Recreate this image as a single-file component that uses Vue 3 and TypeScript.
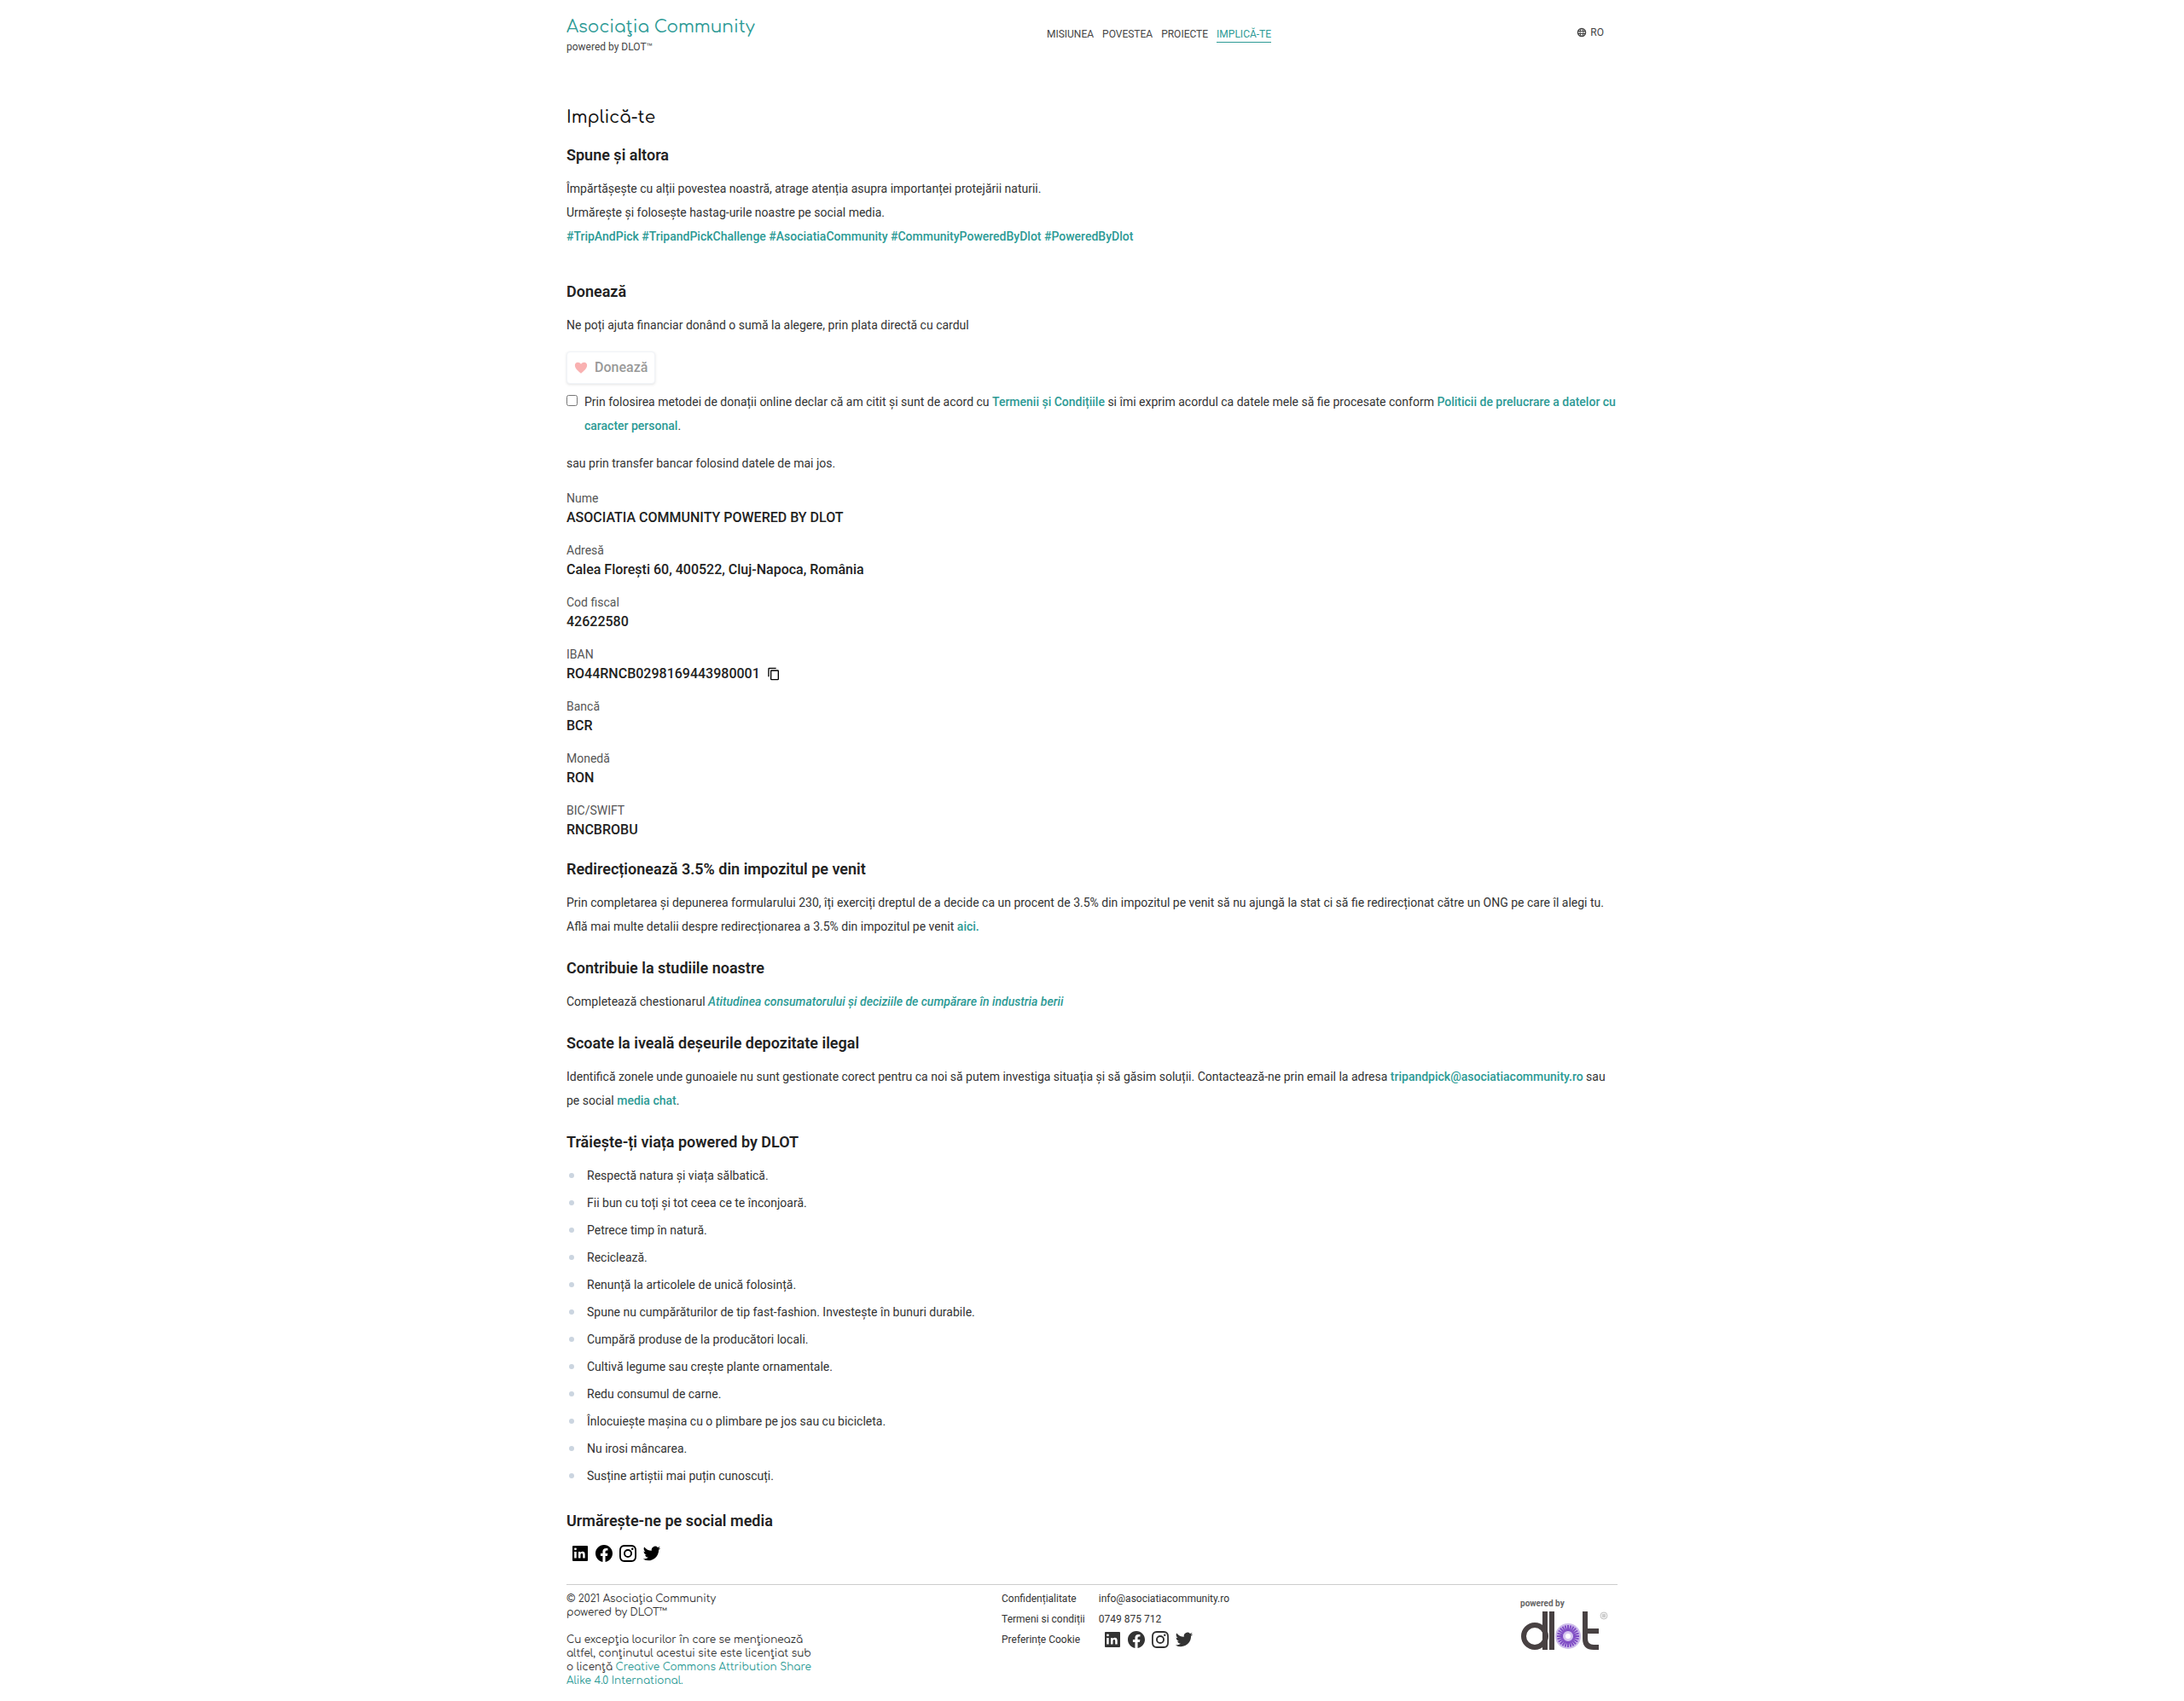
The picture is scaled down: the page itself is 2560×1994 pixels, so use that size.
<script setup lang="ts">
import { ref } from 'vue'

interface NavItem {
  label: string
  active?: boolean
}

interface BankField {
  label: string
  value: string
  copy?: boolean
}

interface SocialIcon {
  name: string
  path: string
}

const accepted = ref(false)

const nav: NavItem[] = [
  { label: 'Misiunea' },
  { label: 'Povestea' },
  { label: 'Proiecte' },
  { label: 'Implică-te', active: true },
]

const hashtags = [
  '#TripAndPick',
  '#TripandPickChallenge',
  '#AsociatiaCommunity',
  '#CommunityPoweredByDlot',
  '#PoweredByDlot',
]

const bank: BankField[] = [
  { label: 'Nume', value: 'ASOCIATIA COMMUNITY POWERED BY DLOT' },
  { label: 'Adresă', value: 'Calea Florești 60, 400522, Cluj-Napoca, România' },
  { label: 'Cod fiscal', value: '42622580' },
  { label: 'IBAN', value: 'RO44RNCB0298169443980001', copy: true },
  { label: 'Bancă', value: 'BCR' },
  { label: 'Monedă', value: 'RON' },
  { label: 'BIC/SWIFT', value: 'RNCBROBU' },
]

const habits = [
  'Respectă natura și viața sălbatică.',
  'Fii bun cu toți și tot ceea ce te înconjoară.',
  'Petrece timp în natură.',
  'Reciclează.',
  'Renunță la articolele de unică folosință.',
  'Spune nu cumpărăturilor de tip fast-fashion. Investește în bunuri durabile.',
  'Cumpără produse de la producători locali.',
  'Cultivă legume sau crește plante ornamentale.',
  'Redu consumul de carne.',
  'Înlocuiește mașina cu o plimbare pe jos sau cu bicicleta.',
  'Nu irosi mâncarea.',
  'Susține artiștii mai puțin cunoscuți.',
]

const legal = ['Confidențialitate', 'Termeni si condiții', 'Preferințe Cookie']

const socials: SocialIcon[] = [
  {
    name: 'LinkedIn',
    path: 'M4 3h16a1 1 0 0 1 1 1v16a1 1 0 0 1-1 1H4a1 1 0 0 1-1-1V4a1 1 0 0 1 1-1zm8.5 8.2V10H10v7.500h2.500v-4c0-1 .6-1.600 1.400-1.600s1.300.6 1.300 1.600v4h2.500v-4.300c0-2.300-1.200-3.400-2.800-3.400-1.200 0-1.900.6-2.400 1.400zM6.500 8.300a1.400 1.400 0 1 0 0-2.900 1.400 1.400 0 0 0 0 2.900zm1.200 9.200V10H5.200v7.500h2.500z',
  },
  {
    name: 'Facebook',
    path: 'M12 2C6.477 2 2 6.477 2 12c0 4.991 3.657 9.128 8.438 9.879V14.890h-2.540V12h2.540V9.797c0-2.506 1.492-3.890 3.777-3.890 1.094 0 2.238.195 2.238.195v2.460h-1.260c-1.243 0-1.630.771-1.630 1.562V12h2.773l-.443 2.890h-2.330v6.989C18.343 21.129 22 16.990 22 12c0-5.523-4.477-10-10-10z',
  },
  {
    name: 'Instagram',
    path: 'M12 2c2.717 0 3.056.010 4.122.060 1.065.050 1.790.217 2.428.465.660.254 1.216.598 1.772 1.153a4.908 4.908 0 0 1 1.153 1.772c.247.637.415 1.363.465 2.428.047 1.066.060 1.405.060 4.122s-.010 3.056-.060 4.122c-.050 1.065-.218 1.790-.465 2.428a4.883 4.883 0 0 1-1.153 1.772 4.915 4.915 0 0 1-1.772 1.153c-.637.247-1.363.415-2.428.465-1.066.047-1.405.060-4.122.060s-3.056-.010-4.122-.060c-1.065-.050-1.790-.218-2.428-.465a4.890 4.890 0 0 1-1.772-1.153 4.904 4.904 0 0 1-1.153-1.772c-.248-.637-.415-1.363-.465-2.428C2.013 15.056 2 14.717 2 12s.010-3.056.060-4.122c.050-1.066.217-1.790.465-2.428a4.880 4.880 0 0 1 1.153-1.772A4.897 4.897 0 0 1 5.450 2.525c.638-.248 1.362-.415 2.428-.465C8.944 2.013 9.283 2 12 2zm0 1.900c-2.650 0-2.960.010-4.010.060-.980.040-1.500.200-1.860.340-.470.180-.800.400-1.150.750-.350.350-.570.680-.750 1.150-.140.360-.300.880-.340 1.860C3.840 9.110 3.830 9.400 3.830 12s.010 2.890.060 3.940c.040.980.200 1.500.340 1.860.180.470.400.800.750 1.150.350.350.680.570 1.150.750.360.140.880.300 1.860.340 1.050.050 1.360.060 4.010.060s2.960-.010 4.010-.060c.980-.040 1.500-.200 1.860-.340.470-.180.800-.400 1.150-.750.350-.350.570-.680.750-1.150.140-.360.300-.880.340-1.860.050-1.050.060-1.340.060-3.940s-.010-2.890-.060-3.940c-.040-.980-.200-1.500-.340-1.860a3.100 3.100 0 0 0-.750-1.150 3.100 3.100 0 0 0-1.150-.750c-.360-.140-.880-.300-1.860-.340C14.960 3.910 14.650 3.900 12 3.900zM12 7a5 5 0 1 1 0 10 5 5 0 0 1 0-10zm0 1.900a3.100 3.100 0 1 0 0 6.200 3.100 3.100 0 0 0 0-6.200zm5.250-3.400a1.250 1.250 0 1 1 0 2.500 1.250 1.250 0 0 1 0-2.500z',
  },
  {
    name: 'Twitter',
    path: 'M22.162 5.656a8.384 8.384 0 0 1-2.402.658A4.196 4.196 0 0 0 21.600 4c-.820.488-1.719.830-2.656 1.015a4.182 4.182 0 0 0-7.126 3.814 11.874 11.874 0 0 1-8.620-4.370 4.168 4.168 0 0 0-.566 2.103c0 1.450.738 2.731 1.860 3.481a4.168 4.168 0 0 1-1.894-.523v.052a4.185 4.185 0 0 0 3.355 4.101 4.210 4.210 0 0 1-1.890.072A4.185 4.185 0 0 0 7.970 16.650a8.394 8.394 0 0 1-6.191 1.732 11.830 11.830 0 0 0 6.410 1.880c7.693 0 11.900-6.373 11.900-11.900 0-.180-.005-.362-.013-.540a8.496 8.496 0 0 0 2.087-2.165z',
  },
]

// Ray angles of the flower inside the logo's letter "o"
const rays = Array.from({ length: 24 }, (_, i) => i * 15)

function copyValue(value: string): void {
  navigator.clipboard?.writeText(value)
}
</script>

<template>
  <div class="page">
    <header class="header">
      <a class="brand" href="#">
        <span class="brand-name">Asociaţia Community</span>
        <span class="brand-sub">powered by DLOT™</span>
      </a>
      <nav class="nav">
        <a v-for="item in nav" :key="item.label" href="#" :class="{ active: item.active }">{{ item.label }}</a>
      </nav>
      <button class="lang" type="button">
        <svg viewBox="0 0 24 24" width="12" height="12" fill="none" stroke="currentColor" stroke-width="2" aria-hidden="true">
          <circle cx="12" cy="12" r="9" stroke-width="3" />
          <ellipse cx="12" cy="12" rx="4" ry="9" />
          <path d="M3 9h18M3 15h18" />
        </svg>
        RO
      </button>
    </header>

    <main>
      <h1>Implică-te</h1>

      <section class="wide">
        <h2>Spune și altora</h2>
        <p>Împărtășește cu alții povestea noastră, atrage atenția asupra importanței protejării naturii.</p>
        <p>Urmărește și folosește hastag-urile noastre pe social media.</p>
        <p class="tags">{{ hashtags.join(' ') }}</p>
      </section>

      <section class="donation">
        <h2>Donează</h2>
        <p>Ne poți ajuta financiar donând o sumă la alegere, prin plata directă cu cardul</p>
        <button class="donate" type="button" :disabled="!accepted">
          <svg viewBox="0 0 24 24" width="18" height="18" aria-hidden="true">
            <path fill="#f56565" d="M12 21C8 17.500 2.500 13 2.500 8.200 2.500 5.300 4.600 3.500 7 3.500c2 0 3.900 1 5 2.700 1.100-1.700 3-2.700 5-2.700 2.400 0 4.500 1.800 4.500 4.700C21.500 13 16 17.500 12 21z" />
          </svg>
          Donează
        </button>
        <div class="consent">
          <input id="consent" v-model="accepted" type="checkbox" />
          <label for="consent">Prin folosirea metodei de donații online declar că am citit și sunt de acord cu <a href="#">Termenii și Condițiile</a> si îmi exprim acordul ca datele mele să fie procesate conform <a href="#">Politicii de prelucrare a datelor cu caracter personal</a>.</label>
        </div>
        <p class="transfer">sau prin transfer bancar folosind datele de mai jos.</p>
        <dl class="bank">
          <div v-for="field in bank" :key="field.label">
            <dt>{{ field.label }}</dt>
            <dd>
              {{ field.value }}
              <button v-if="field.copy" class="copy" type="button" aria-label="Copiază IBAN" @click="copyValue(field.value)">
                <svg viewBox="0 0 24 24" width="16" height="16" fill="currentColor" aria-hidden="true">
                  <path d="M16 1H4a2 2 0 0 0-2 2v14h2V3h12V1zm3 4H8a2 2 0 0 0-2 2v14a2 2 0 0 0 2 2h11a2 2 0 0 0 2-2V7a2 2 0 0 0-2-2zm0 16H8V7h11v14z" />
                </svg>
              </button>
            </dd>
          </div>
        </dl>
      </section>

      <section>
        <h2>Redirecționează 3.5% din impozitul pe venit</h2>
        <p>Prin completarea și depunerea formularului 230, îți exerciți dreptul de a decide ca un procent de 3.5% din impozitul pe venit să nu ajungă la stat ci să fie redirecționat către un ONG pe care îl alegi tu. Află mai multe detalii despre redirecționarea a 3.5% din impozitul pe venit <a href="#">aici.</a></p>
      </section>

      <section>
        <h2>Contribuie la studiile noastre</h2>
        <p>Completează chestionarul <a href="#"><em>Atitudinea consumatorului și deciziile de cumpărare în industria berii</em></a></p>
      </section>

      <section>
        <h2>Scoate la iveală deșeurile depozitate ilegal</h2>
        <p>Identifică zonele unde gunoaiele nu sunt gestionate corect pentru ca noi să putem investiga situația și să găsim soluții. Contactează-ne prin email la adresa <a href="#">tripandpick@asociatiacommunity.ro</a> sau pe social <a href="#">media chat</a>.</p>
      </section>

      <section class="habits">
        <h2>Trăiește-ți viața powered by DLOT</h2>
        <ul>
          <li v-for="habit in habits" :key="habit">{{ habit }}</li>
        </ul>
      </section>

      <section class="follow">
        <h2>Urmărește-ne pe social media</h2>
        <div class="socials">
          <a v-for="icon in socials" :key="icon.name" href="#" :aria-label="icon.name">
            <svg viewBox="0 0 24 24" width="24" height="24" fill="currentColor" fill-rule="evenodd"><path :d="icon.path" /></svg>
          </a>
        </div>
      </section>
    </main>

    <footer class="footer">
      <div class="license">
        <p>© 2021 Asociaţia Community<br />powered by DLOT™</p>
        <p>Cu excepţia locurilor în care se menţionează altfel, conţinutul acestui site este licenţiat sub o licenţă <a href="#">Creative Commons Attribution Share Alike 4.0 International.</a></p>
      </div>
      <div class="contact">
        <div class="links">
          <a v-for="item in legal" :key="item" href="#">{{ item }}</a>
        </div>
        <div class="links">
          <a href="#">info@asociatiacommunity.ro</a>
          <a href="#">0749 875 712</a>
          <div class="socials">
            <a v-for="icon in socials" :key="icon.name" href="#" :aria-label="icon.name">
              <svg viewBox="0 0 24 24" width="24" height="24" fill="currentColor" fill-rule="evenodd"><path :d="icon.path" /></svg>
            </a>
          </div>
        </div>
      </div>
      <a class="partner" href="#" aria-label="powered by dlot">
        <svg viewBox="0 0 120 70" width="120" height="70">
          <text x="6" y="17" class="partner-text">powered by</text>
          <g fill="none" stroke="#484142" stroke-width="6">
            <circle cx="23" cy="52" r="13" />
            <path d="M35 23v45M43 23v45" />
            <path d="M82 23v32q0 10 10 10h6M82 46h16" />
          </g>
          <circle cx="62" cy="52" r="15" fill="#cdbbea" />
          <g stroke="#7f4cc4" stroke-width="2">
            <path v-for="angle in rays" :key="angle" d="M62 46V39" :transform="`rotate(${angle} 62 52)`" />
          </g>
          <circle cx="62" cy="52" r="4" fill="#fff" stroke="#d9c8f0" stroke-width="2" />
          <circle cx="104" cy="28" r="4" fill="#f4f4f4" stroke="#c4c4c4" />
          <path d="M102 27h4M102 29h4" stroke="#a8a8a8" />
        </svg>
      </a>
    </footer>
  </div>
</template>

<style>
body {
  margin: 0;
  background: #fff;
}
</style>

<style scoped>
.page {
  box-sizing: border-box;
  max-width: 1280px;
  margin: 0 auto;
  padding: 0 24px 16px;
  color: #333;
  font: 400 14px/28px Roboto, "Noto Sans", sans-serif;
}

h1,
h2,
p,
ul,
dl,
dd {
  margin: 0;
  padding: 0;
}

a {
  color: #2c9a95;
  text-decoration: none;
}

button {
  font: inherit;
  color: inherit;
  cursor: pointer;
}

svg {
  display: block;
}

.header {
  display: flex;
  justify-content: space-between;
  align-items: flex-start;
  padding-top: 18px;
}

.brand {
  display: flex;
  flex-direction: column;
}

.brand-name {
  font: 400 20px/28px Comfortaa, Lato, sans-serif;
}

.brand-sub {
  color: #444;
  font-size: 12px;
  line-height: 18px;
}

.nav {
  display: flex;
  gap: 10px;
  padding-top: 14px;
  font-size: 12px;
  line-height: 16px;
  text-transform: uppercase;
}

.nav a {
  padding-bottom: 1px;
  border-bottom: 1px solid transparent;
  color: #444;
}

.nav a.active {
  border-color: #2c9a95;
  color: #2c9a95;
}

.lang {
  display: flex;
  align-items: center;
  gap: 4px;
  margin-top: 12px;
  padding: 0 16px;
  border: 0;
  background: none;
  color: #444;
  font-size: 12px;
  line-height: 16px;
}

h1 {
  margin: 59px 0 14px;
  color: #111;
  font: 500 20px/30px Comfortaa, Lato, sans-serif;
}

h2 {
  margin-bottom: 10px;
  color: #222;
  font-size: 18px;
  font-weight: 600;
  line-height: 30px;
}

section {
  margin-bottom: 20px;
}

section.wide {
  margin-bottom: 36px;
}

section.donation {
  margin-bottom: 19px;
}

section.habits,
section.follow {
  margin-bottom: 24px;
}

.follow h2 {
  margin-bottom: 11px;
}

p a,
.consent a,
.tags {
  color: #2c9a95;
  font-weight: 500;
}

.donate {
  display: flex;
  align-items: center;
  gap: 7px;
  margin: 17px 0 7px;
  padding: 6px 8px 6px 7px;
  border: 1px solid #e2e8f0;
  border-radius: 4px;
  background: #fff;
  box-shadow: 0 1px 3px rgba(0, 0, 0, 0.2);
  color: #333;
  font-size: 16px;
  font-weight: 500;
  line-height: 24px;
}

.donate:disabled {
  opacity: 0.5;
  cursor: default;
}

.consent {
  display: flex;
  align-items: flex-start;
  gap: 8px;
}

.consent input {
  flex: none;
  width: 13px;
  height: 13px;
  margin: 6px 0 0;
}

.transfer {
  margin: 16px 0 17px;
}

.bank {
  display: flex;
  flex-direction: column;
  gap: 16px;
}

.bank dt {
  color: #555;
  line-height: 21px;
}

.bank dd {
  display: flex;
  align-items: center;
  gap: 8px;
  color: #222;
  font-size: 16px;
  font-weight: 500;
  line-height: 24px;
}

.copy {
  padding: 0;
  border: 0;
  background: none;
  color: #000;
}

ul {
  display: flex;
  flex-direction: column;
  gap: 4px;
  list-style: none;
}

li {
  display: flex;
  align-items: center;
}

li::before {
  content: "";
  width: 6px;
  height: 6px;
  margin: 0 15px 0 3px;
  border-radius: 50%;
  background: #cbd5e0;
}

.socials {
  display: flex;
  gap: 4px;
  padding-left: 4px;
}

.socials a {
  color: #000;
}

.footer {
  display: grid;
  grid-template-columns: 41.4% auto 1fr;
  padding-top: 8px;
  border-top: 1px solid #ccc;
  font-size: 12px;
  line-height: 16px;
}

.license {
  display: flex;
  flex-direction: column;
  gap: 16px;
  max-width: 288px;
  font-family: Comfortaa, Lato, sans-serif;
}

.license a {
  font-weight: 400;
}

.contact {
  display: flex;
  gap: 16px;
}

.links {
  display: flex;
  flex-direction: column;
  gap: 8px;
}

.links a,
.links .socials a {
  color: #333;
}

.links .socials {
  align-items: center;
  height: 16px;
}

.partner {
  justify-self: end;
}

.partner-text {
  fill: #666;
  font: 700 10px Roboto, sans-serif;
}
</style>
